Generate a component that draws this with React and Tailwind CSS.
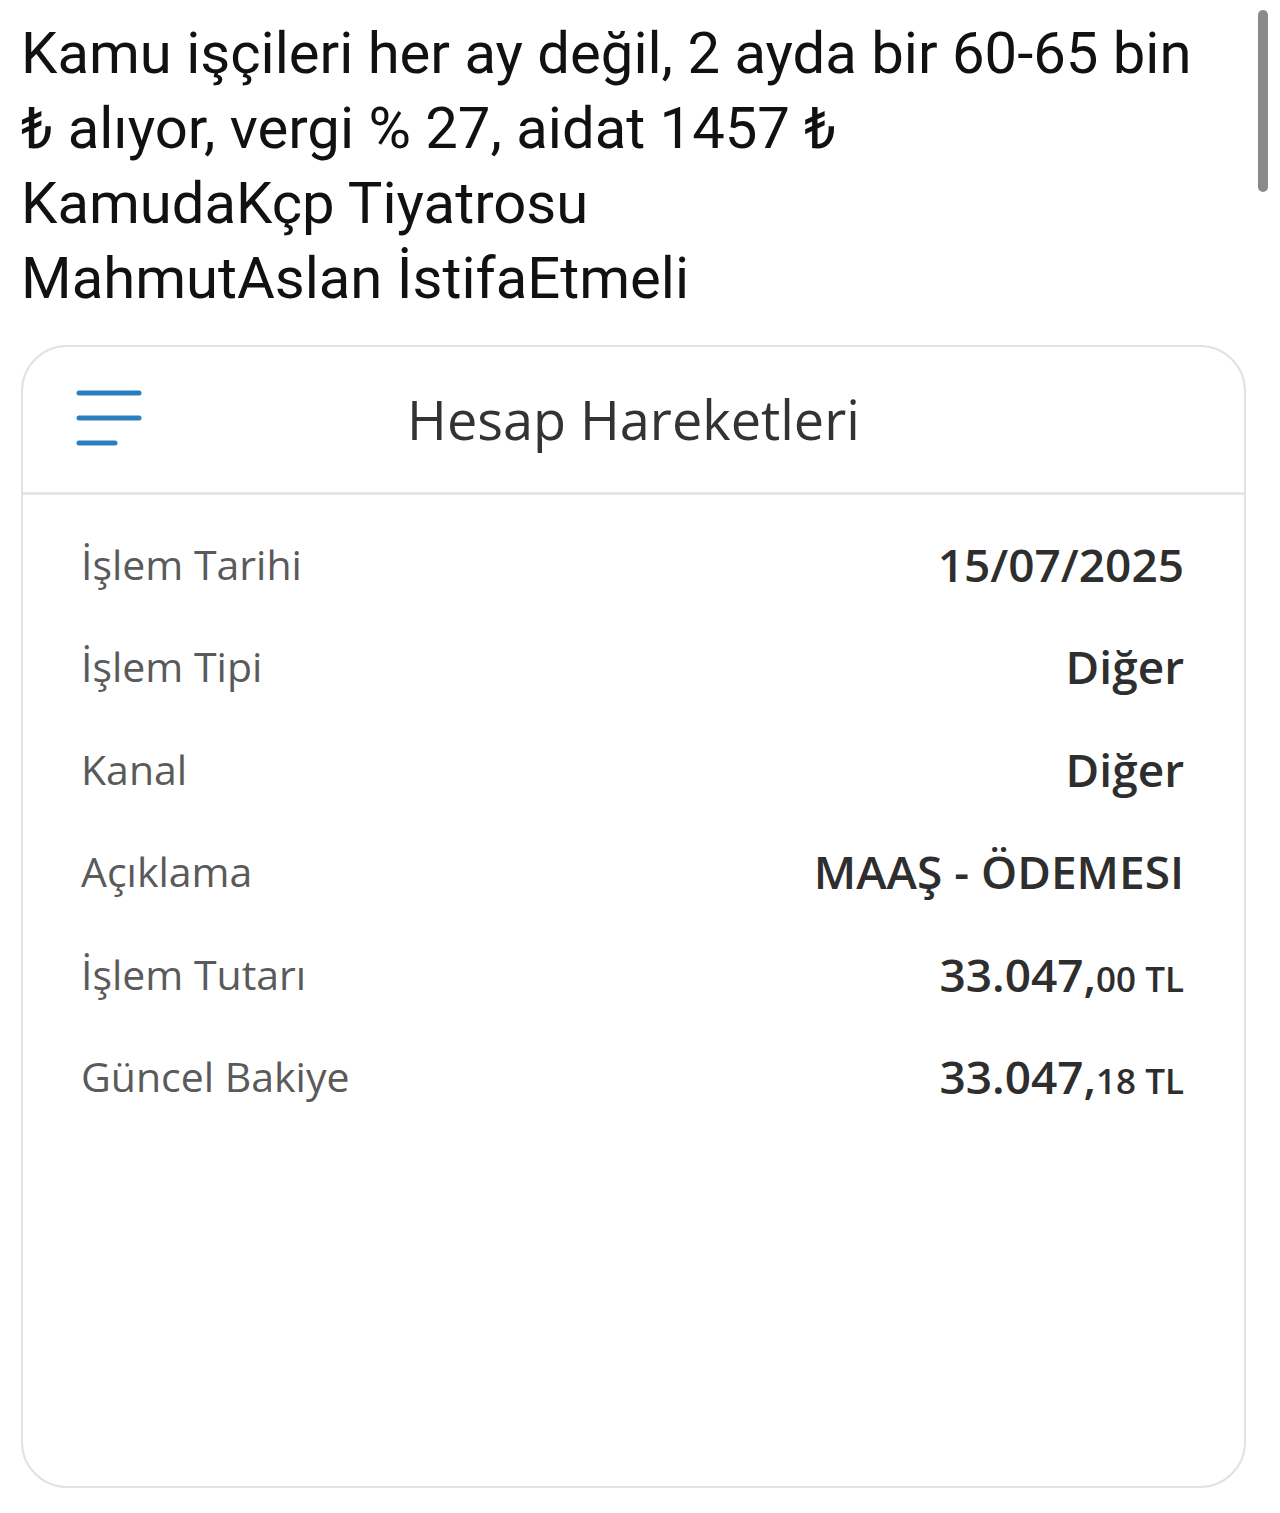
import React from 'react'

const rows = [
  { label: 'İşlem Tarihi', value: '15/07/2025' },
  { label: 'İşlem Tipi', value: 'Diğer' },
  { label: 'Kanal', value: 'Diğer' },
  { label: 'Açıklama', value: 'MAAŞ - ÖDEMESI' },
  { label: 'İşlem Tutarı', main: '33.047,', cents: '00 TL' },
  { label: 'Güncel Bakiye', main: '33.047,', cents: '18 TL' },
]

function MenuIcon() {
  return (
    <svg width="70" height="62" viewBox="0 0 70 62" fill="none">
      <g stroke="#2a80bf" strokeWidth="5" strokeLinecap="round">
        <line x1="4" y1="6" x2="64" y2="6" />
        <line x1="4" y1="31" x2="64" y2="31" />
        <line x1="4" y1="56" x2="40" y2="56" />
      </g>
    </svg>
  )
}

export default function App() {
  return (
    <div className="relative min-h-screen bg-white">
      <div className="absolute right-[12px] top-[10px] h-[182px] w-[10px] rounded-full bg-[#8a8a8a]" />

      <div className="pl-[21px] pt-[16px] font-['Roboto',sans-serif] text-[58px] leading-[75px] text-[#111]">
        <div>Kamu işçileri her ay değil, 2 ayda bir 60-65 bin</div>
        <div>₺ alıyor, vergi % 27, aidat 1457 ₺</div>
        <div>KamudaKçp Tiyatrosu</div>
        <div>MahmutAslan İstifaEtmeli</div>
      </div>

      <div className="ml-[21px] mt-[29px] flex h-[1143px] w-[1225px] flex-col rounded-[46px] border-2 border-[#e2e2e2] font-['Open_Sans',sans-serif]">
        <div className="relative flex h-[148px] items-center justify-center border-b-[3px] border-[#e3e7ea]">
          <div className="absolute left-[52px] top-[40px]">
            <MenuIcon />
          </div>
          <h1 className="text-[54px] font-normal text-[#333]">Hesap Hareketleri</h1>
        </div>

        <div className="flex flex-col pl-[58px] pr-[60px] pt-[18px]">
          {rows.map((row) => (
            <div key={row.label} className="flex h-[102.5px] items-center justify-between">
              <span className="text-[41px] text-[#5a5a5a]">{row.label}</span>
              {row.main ? (
                <span className="font-semibold text-[#2e2e2e]">
                  <span className="text-[46px]">{row.main}</span>
                  <span className="text-[35px]">{row.cents}</span>
                </span>
              ) : (
                <span className="text-[46px] font-semibold text-[#2e2e2e]">{row.value}</span>
              )}
            </div>
          ))}
        </div>
      </div>
    </div>
  )
}
